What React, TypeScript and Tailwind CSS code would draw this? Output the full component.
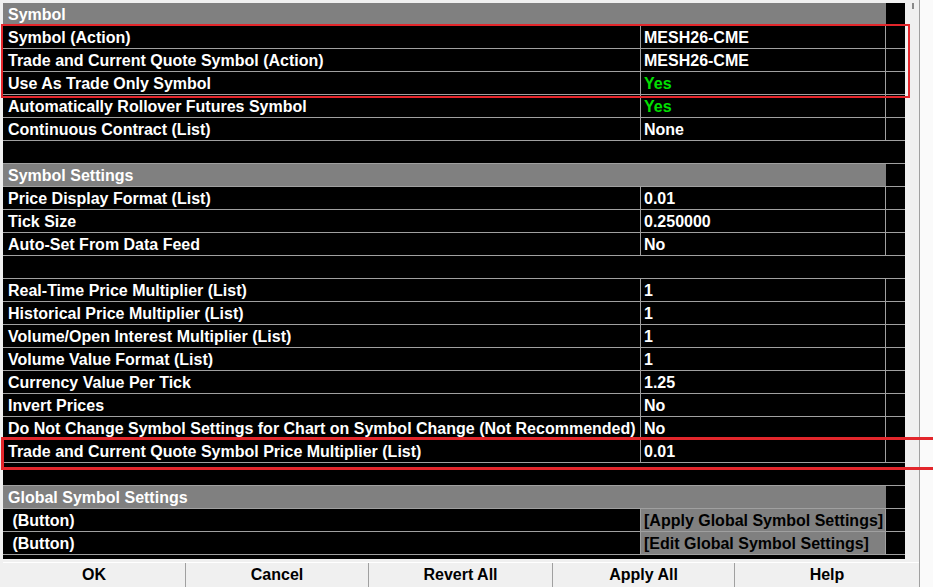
import React from "react";

type Row =
  | { kind: "header"; label: string }
  | { kind: "blank" }
  | { kind: "item"; label: string; value: string; green?: boolean; button?: boolean };

const rows: Row[] = [
  { kind: "header", label: "Symbol" },
  { kind: "item", label: "Symbol (Action)", value: "MESH26-CME" },
  { kind: "item", label: "Trade and Current Quote Symbol (Action)", value: "MESH26-CME" },
  { kind: "item", label: "Use As Trade Only Symbol", value: "Yes", green: true },
  { kind: "item", label: "Automatically Rollover Futures Symbol", value: "Yes", green: true },
  { kind: "item", label: "Continuous Contract (List)", value: "None" },
  { kind: "blank" },
  { kind: "header", label: "Symbol Settings" },
  { kind: "item", label: "Price Display Format (List)", value: "0.01" },
  { kind: "item", label: "Tick Size", value: "0.250000" },
  { kind: "item", label: "Auto-Set From Data Feed", value: "No" },
  { kind: "blank" },
  { kind: "item", label: "Real-Time Price Multiplier (List)", value: "1" },
  { kind: "item", label: "Historical Price Multiplier (List)", value: "1" },
  { kind: "item", label: "Volume/Open Interest Multiplier (List)", value: "1" },
  { kind: "item", label: "Volume Value Format (List)", value: "1" },
  { kind: "item", label: "Currency Value Per Tick", value: "1.25" },
  { kind: "item", label: "Invert Prices", value: "No" },
  { kind: "item", label: "Do Not Change Symbol Settings for Chart on Symbol Change (Not Recommended)", value: "No" },
  { kind: "item", label: "Trade and Current Quote Symbol Price Multiplier (List)", value: "0.01" },
  { kind: "blank" },
  { kind: "header", label: "Global Symbol Settings" },
  { kind: "item", label: " (Button)", value: "[Apply Global Symbol Settings]", button: true },
  { kind: "item", label: " (Button)", value: "[Edit Global Symbol Settings]", button: true },
];

function TableRow({ row }: { row: Row }) {
  if (row.kind === "blank") {
    return <div className="h-[23px] bg-black border-b border-[#a0a0a0]" />;
  }
  if (row.kind === "header") {
    return (
      <div className="h-[23px] flex border-b border-[#a0a0a0]">
        <div className="w-[883px] bg-[#808080] text-white pl-[5px] leading-[23px]">{row.label}</div>
        <div className="flex-1 bg-black" />
      </div>
    );
  }
  return (
    <div className="h-[23px] flex bg-black border-b border-[#a0a0a0]">
      <div className="w-[638px] border-r border-[#a0a0a0] text-white pl-[5px] leading-[23px] whitespace-pre overflow-hidden">
        {row.label}
      </div>
      <div
        className={`w-[245px] border-r border-[#a0a0a0] pl-[3px] leading-[23px] whitespace-pre overflow-hidden ${
          row.button ? "bg-[#808080] text-black" : row.green ? "text-[#00e000]" : "text-white"
        }`}
      >
        {row.value}
      </div>
      <div className="flex-1" />
    </div>
  );
}

const buttons = [
  { label: "OK", w: "w-[183px]" },
  { label: "Cancel", w: "w-[183px]" },
  { label: "Revert All", w: "w-[184px]" },
  { label: "Apply All", w: "w-[182px]" },
  { label: "Help", w: "flex-1" },
];

export default function App() {
  return (
    <div
      className="relative w-[933px] h-[587px] overflow-hidden flex bg-[#f0f0f0] text-[16px] font-bold"
      style={{ fontFamily: '"Liberation Sans", Arial, sans-serif' }}
    >
      {/* main window */}
      <div className="w-[920px] flex flex-col pt-[3px] pl-[3px] border-r border-[#a0a0a0]">
        <div className="flex">
          <div className="w-[902px]">
            {rows.map((r, i) => (
              <TableRow key={i} row={r} />
            ))}
            <div className="h-[4px] bg-black" />
          </div>
          {/* scrollbar gutter */}
          <div className="flex-1">
            <div className="ml-[7px] w-[2px] h-[6px] bg-[#888]" />
          </div>
        </div>
        <div className="mt-[3px] flex h-[27px] border-t border-white">
          {buttons.map((b, i) => (
            <div
              key={b.label}
              className={`${b.w} ${i < buttons.length - 1 ? "border-r border-[#a0a0a0]" : ""} flex items-center justify-center text-black`}
            >
              {b.label}
            </div>
          ))}
        </div>
      </div>
      <div className="flex-1 bg-[#fafafa]" />

      {/* red annotation boxes */}
      <div className="absolute left-[1px] top-[24px] w-[909px] h-[74px] border-2 border-[#e3262b]" />
      <div className="absolute left-[1px] top-[437px] w-[940px] h-[33px] border-[3px] border-[#e3262b]" />
    </div>
  );
}
